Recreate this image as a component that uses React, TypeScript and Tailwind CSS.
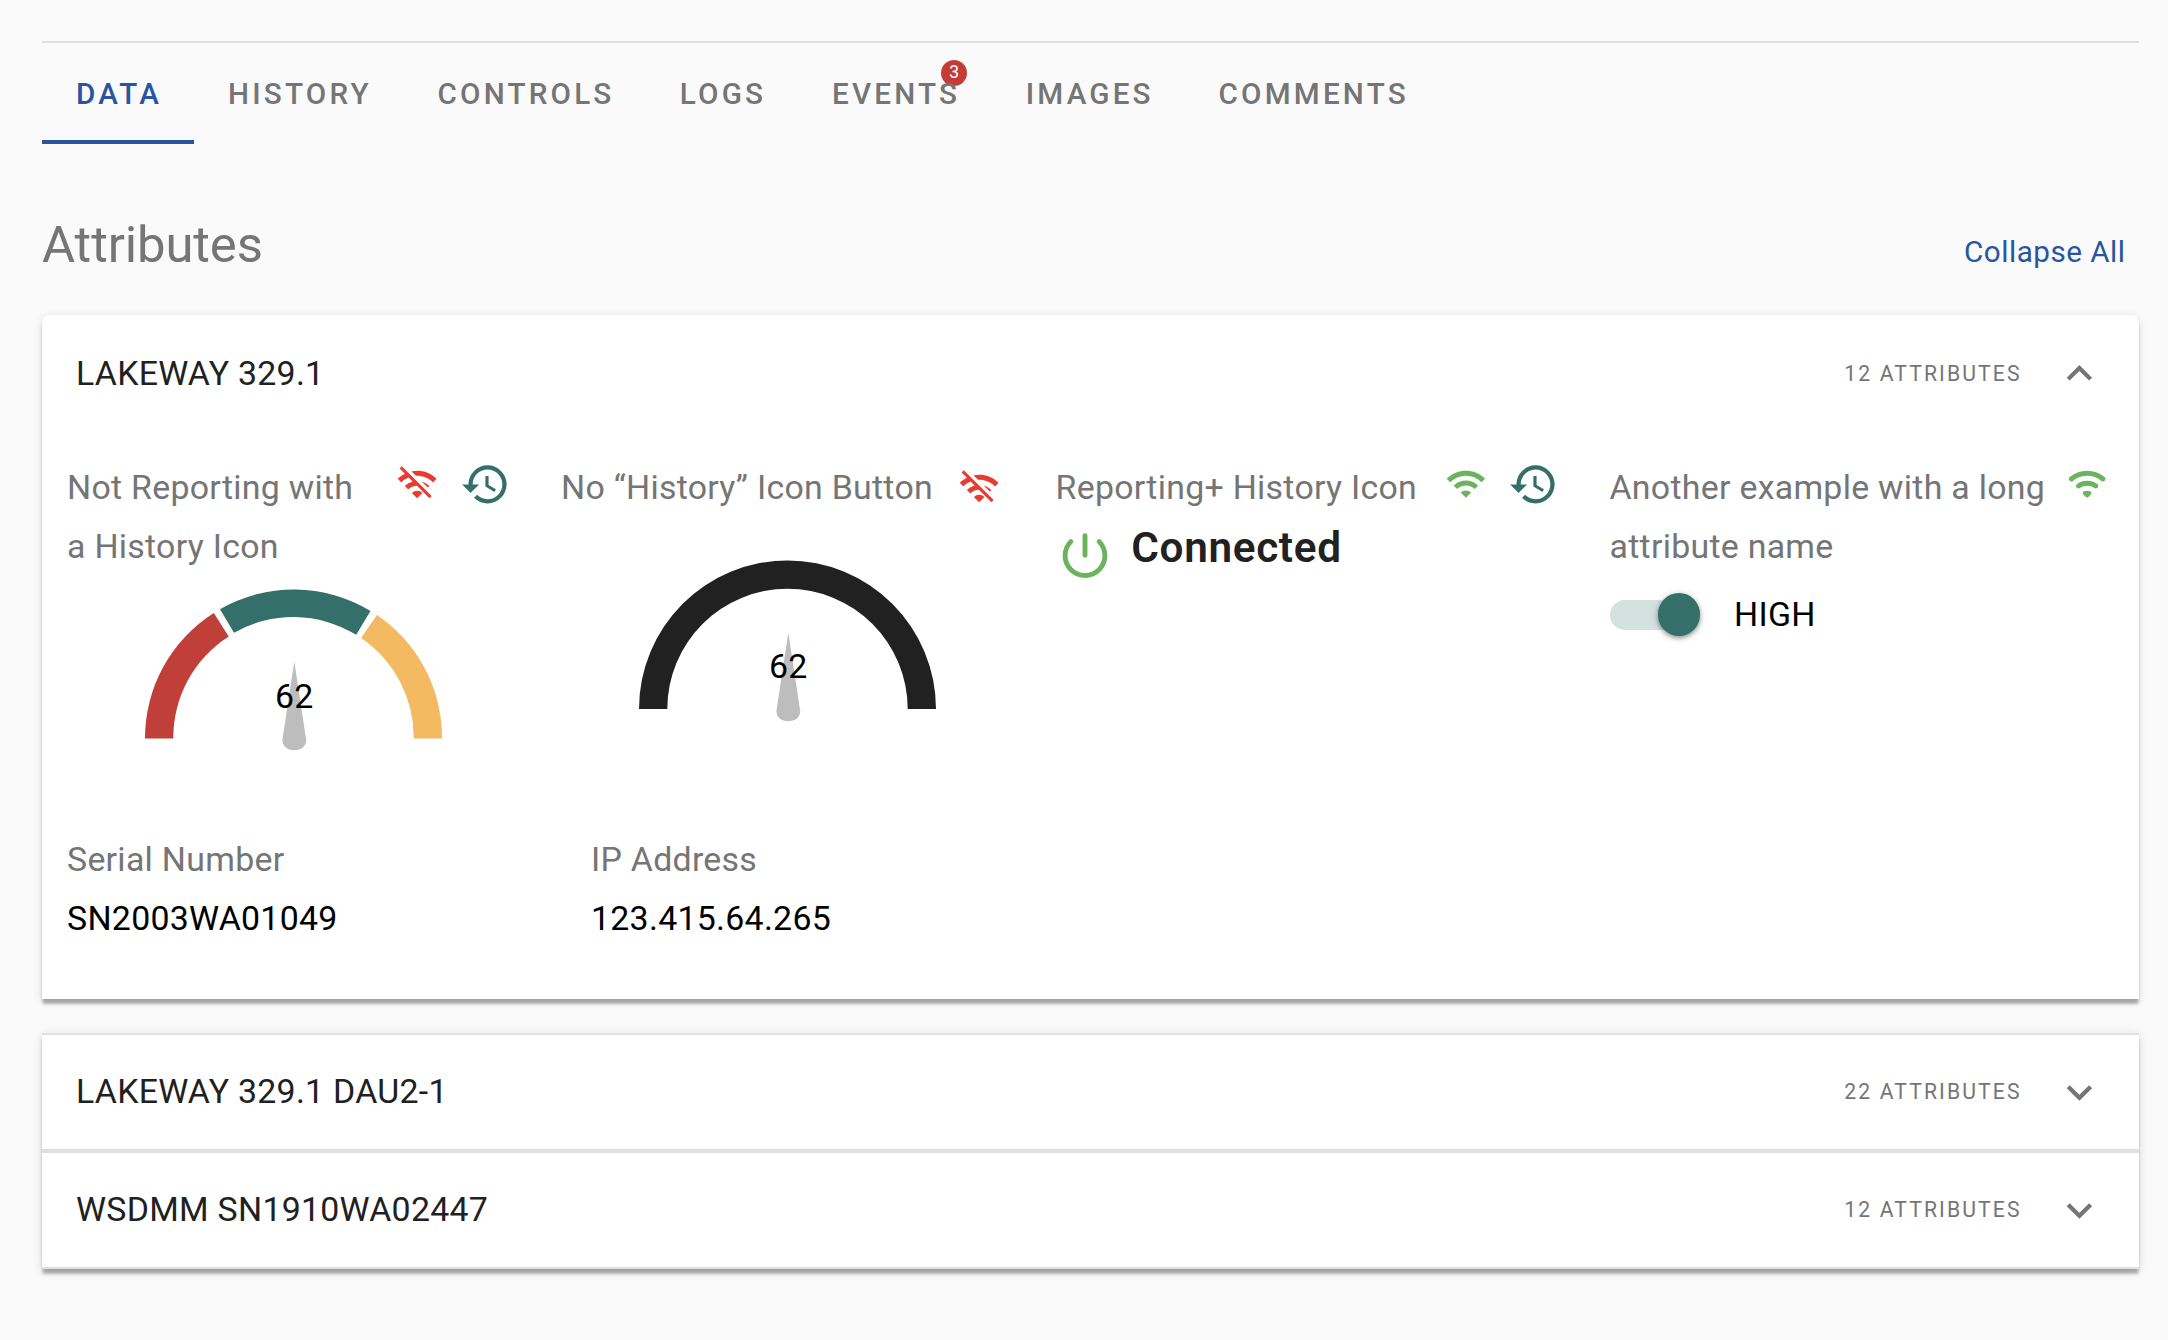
import React from "react";

const WIFI_OFF =
  "M22.99 9C19.15 5.16 13.8 3.76 8.84 4.78l2.52 2.52c3.47-.17 6.99 1.05 9.63 3.7l2-2zm-4 4a9.793 9.793 0 00-4.49-2.56l3.53 3.53.96-.97zM2 3.05L5.07 6.1C3.6 6.82 2.22 7.78 1 9l1.99 2c1.24-1.24 2.67-2.16 4.2-2.77l2.24 2.24A9.684 9.684 0 005 13v.01L6.99 15a7.042 7.042 0 014.92-2.06L18.98 20l1.27-1.26L3.29 1.79 2 3.05zM9 17l3 3 3-3a4.237 4.237 0 00-6 0z";
const WIFI =
  "M1 9l2 2c4.97-4.97 13.03-4.97 18 0l2-2C16.93 2.93 7.08 2.93 1 9zm8 8l3 3 3-3a4.237 4.237 0 00-6 0zm-4-4l2 2a7.074 7.074 0 0110 0l2-2C15.14 9.14 8.87 9.14 5 13z";
const WIFI_ROUND =
  "M2.06 10.06c.51.51 1.32.56 1.87.1 4.67-3.84 11.45-3.84 16.13-.01.56.46 1.38.42 1.89-.09.59-.59.55-1.57-.1-2.1-5.71-4.67-13.97-4.67-19.69 0-.65.52-.7 1.5-.1 2.1zm7.76 7.76l1.47 1.47c.39.39 1.02.39 1.41 0l1.47-1.47c.47-.47.37-1.28-.23-1.59-1.22-.63-2.68-.63-3.91 0-.57.31-.68 1.12-.21 1.59zm-3.73-3.73c.49.49 1.26.54 1.83.13 2.44-1.73 5.72-1.73 8.16 0 .57.4 1.34.36 1.83-.13l.01-.01c.6-.6.56-1.62-.13-2.11-3.44-2.49-8.13-2.49-11.58 0-.69.5-.73 1.51-.12 2.12z";
const HISTORY =
  "M13 3a9 9 0 00-9 9H1l3.89 3.89.07.14L9 12H6c0-3.87 3.13-7 7-7s7 3.13 7 7-3.13 7-7 7c-1.93 0-3.68-.79-4.94-2.06l-1.42 1.42A8.954 8.954 0 0013 21a9 9 0 000-18zm-1 5v5l4.28 2.54.72-1.21-3.5-2.08V8H12z";
const CHEVRON_DOWN = "M7.41 8.59L12 13.17l4.59-4.58L18 10l-6 6-6-6 1.41-1.41z";
const CHEVRON_UP = "M7.41 15.41L12 10.83l4.59 4.58L18 14l-6-6-6 6z";

function Icon({ d, className }: { d: string; className: string }) {
  return (
    <svg viewBox="0 0 24 24" fill="currentColor" className={`shrink-0 ${className}`}>
      <path d={d} />
    </svg>
  );
}

const tabs = [
  { label: "DATA", width: "w-[152px]", active: true },
  { label: "HISTORY", width: "w-[209.5px]" },
  { label: "CONTROLS", width: "w-[242.3px]" },
  { label: "LOGS", width: "w-[152.2px]" },
  { label: "EVENTS", width: "w-[193.7px]", badge: "3" },
  { label: "IMAGES", width: "w-[192.9px]" },
  { label: "COMMENTS", width: "w-[260px]" },
];

function Tabs() {
  return (
    <nav className="flex h-[103px] border-t-2 border-[#dfdfdf]">
      {tabs.map((t) => (
        <div
          key={t.label}
          className={`${t.width} flex h-[101px] shrink-0 flex-col justify-between pt-[29px] text-[29.63px] leading-[44px] font-medium tracking-[3.2px] ${
            t.active ? "text-[#28559f]" : "text-[#757575]"
          }`}
        >
          <div className="relative isolate ml-[34px] self-start whitespace-nowrap">
            {t.badge && (
              <span className="absolute -top-[12.5px] right-[-7px] -z-10 flex size-[26px] items-center justify-center rounded-full bg-[#c53c36] text-[17.5px] leading-none font-normal tracking-normal text-white">
                {t.badge}
              </span>
            )}
            {t.label}
          </div>
          {t.active && <div className="h-1 bg-[#28559f]" />}
        </div>
      ))}
    </nav>
  );
}

function PanelHeader({ title, count, open }: { title: string; count: number; open?: boolean }) {
  return (
    <div className="flex h-full items-center justify-between pr-[34px] pl-[34px]">
      <span className={`text-[33.87px] text-[#212121] ${open ? "pt-px" : ""}`}>{title}</span>
      <div className="flex items-center gap-8">
        <span className="text-[21.2px] tracking-[2.1px] text-[#757575]">{count} ATTRIBUTES</span>
        <Icon d={open ? CHEVRON_UP : CHEVRON_DOWN} className="size-[50.8px] text-[#757575]" />
      </div>
    </div>
  );
}

function Gauge({ segments, textY }: { segments: { d: string; color: string }[]; textY: number }) {
  return (
    <svg viewBox="0 0 297 162" className="ml-[78px] h-[162px] w-[297px]">
      {segments.map((s) => (
        <path key={s.d} d={s.d} fill={s.color} />
      ))}
      <path d="M149.3 72.5L161.2 151C161.2 157.5 156 161.2 149.2 161.2S137.4 157.5 137.4 151Z" fill="#bdbdbd" />
      <text x="149.2" y={textY} textAnchor="middle" fontSize="33.87" fill="#000">
        62
      </text>
    </svg>
  );
}

const rangeSegments = [
  { d: "M0 149.4A148.5 148.5 0 0 1 68.8 24L83.7 47.4A120.2 120.2 0 0 0 28.3 149.4Z", color: "#c03f38" },
  { d: "M75 20.2A148.5 148.5 0 0 1 225.5 22L211.2 45.8A120.2 120.2 0 0 0 89 43.8Z", color: "#356f69" },
  { d: "M232 26A148.5 148.5 0 0 1 297 149.4H268.7A120.2 120.2 0 0 0 216 49Z", color: "#f3ba62" },
];

const solidSegment = [
  { d: "M0 149A148.5 148.5 0 0 1 297 149H268.7A120.2 120.2 0 0 0 28.3 149Z", color: "#212121" },
];

export default function App() {
  return (
    <div className="h-[1340px] w-[2168px] bg-[#fafafa] pt-[41px] pr-[29.5px] pl-[42px] font-[Roboto,sans-serif] tracking-[0.28px]">
      <Tabs />

      <div className="flex h-[171px] items-start justify-between pr-[13px]">
        <h1 className="mt-[71px] text-[50.8px] leading-[60px] tracking-[-0.1px] text-[#757575]">Attributes</h1>
        <button className="mt-[88px] text-[29.63px] leading-[40px] tracking-[0.5px] text-[#28559f]">
          Collapse All
        </button>
      </div>

      <section className="h-[684px] rounded-t-[8px] bg-white shadow-[0_6px_3px_-1px_rgba(0,0,0,0.2),0_4px_3px_0_rgba(0,0,0,0.12),0_2px_10px_0_rgba(0,0,0,0.12)]">
        <div className="h-[117px]">
          <PanelHeader title="LAKEWAY 329.1" count={12} open />
        </div>

        <div className="grid h-[371.5px] grid-cols-[494px_494.5px_554px_1fr] pt-[26px] pl-[25px] text-[33.87px] leading-[59.2px] text-[#757575] box-content">
          <div>
            <div className="flex items-start">
              <div className="w-[300px]">Not Reporting with a History Icon</div>
              <Icon d={WIFI_OFF} className="mt-[5px] ml-[29.3px] size-[42.3px] text-[#e83c30]" />
              <Icon d={HISTORY} className="mt-[0.7px] ml-[21.6px] size-[50.8px] text-[#346f69]" />
            </div>
            <div className="mt-[13px]">
              <Gauge segments={rangeSegments} textY={119} />
            </div>
          </div>

          <div>
            <div className="flex items-start">
              <div className="w-[397px] whitespace-nowrap">No “History” Icon Button</div>
              <Icon d={WIFI_OFF} className="mt-[9px] size-[42.3px] text-[#e83c30]" />
            </div>
            <div className="mt-[42.4px]">
              <Gauge segments={solidSegment} textY={118.2} />
            </div>
          </div>

          <div>
            <div className="flex items-start">
              <div className="w-[389.9px] whitespace-nowrap">Reporting+ History Icon</div>
              <Icon d={WIFI} className="mt-[5.4px] size-[41.8px] text-[#6ab45e]" />
              <Icon d={HISTORY} className="mt-[0.7px] ml-[21.1px] size-[50.8px] text-[#346f69]" />
            </div>
            <div className="flex items-start">
              <svg
                viewBox="0 0 48 48"
                className="mt-[14.2px] ml-[5.3px] size-12 text-[#6ab45e]"
                fill="none"
                stroke="currentColor"
                strokeWidth="4.9"
                strokeLinecap="round"
              >
                <path d="M24 4.8V24.2" />
                <path d="M9.8 10.6A19.9 19.9 0 1 0 38.2 10.6" />
              </svg>
              <span className="ml-[22.5px] text-[42.3px] leading-[61.5px] font-semibold tracking-[0.65px] text-[#212121]">
                Connected
              </span>
            </div>
          </div>

          <div>
            <div className="flex items-start">
              <div className="w-[456.9px]">Another example with a long attribute name</div>
              <Icon d={WIFI_ROUND} className="mt-[5.3px] size-[42.3px] text-[#6ab45e]" />
            </div>
            <div className="mt-[8px] flex items-center">
              <div className="flex h-[30px] w-[72px] items-center rounded-full bg-[#d3e1df] pl-[48px]">
                <div className="size-[42.3px] shrink-0 rounded-full bg-[#346f69] shadow-[0_2px_4px_rgba(0,0,0,0.35),0_1px_8px_rgba(0,0,0,0.15)]" />
              </div>
              <span className="ml-[52.6px] pt-px text-black">HIGH</span>
            </div>
          </div>
        </div>

        <div className="flex pl-[25px] text-[33.87px] leading-[59px]">
          <div className="w-[524px]">
            <div className="text-[#757575]">Serial Number</div>
            <div className="text-black">SN2003WA01049</div>
          </div>
          <div>
            <div className="text-[#757575]">IP Address</div>
            <div className="text-black">123.415.64.265</div>
          </div>
        </div>
      </section>

      <section className="mt-[34px] border-y-2 border-[#e0e0e0] bg-white shadow-[0_6px_3px_-1px_rgba(0,0,0,0.2),0_4px_3px_0_rgba(0,0,0,0.12),0_2px_10px_0_rgba(0,0,0,0.12)]">
        <div className="h-[118px] border-b-4 border-[#e0e0e0]">
          <PanelHeader title="LAKEWAY 329.1 DAU2-1" count={22} />
        </div>
        <div className="h-[114px]">
          <PanelHeader title="WSDMM SN1910WA02447" count={12} />
        </div>
      </section>
    </div>
  );
}
